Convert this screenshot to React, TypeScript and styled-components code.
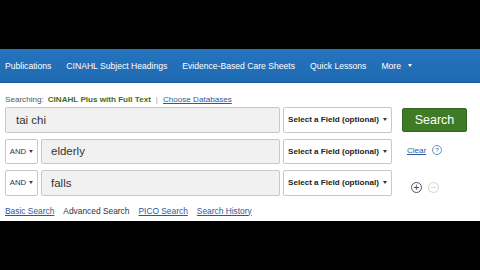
import React from 'react'
import styled, { createGlobalStyle } from 'styled-components'

const COLORS = {
  black: '#000000',
  nav: '#1f6bb3',
  navBorder: '#175a9a',
  white: '#ffffff',
  gray: '#c8c8c8',
  inputBg: '#f1f1f1',
  text: '#333333',
  green: '#3c6e1e',
  button: '#3f7a27',
  link: '#2a5a9e',
}

const GlobalStyle = createGlobalStyle`
  html, body {
    margin: 0;
    padding: 0;
    background: ${COLORS.black};
    font-family: 'Liberation Sans', Arial, sans-serif;
  }
`

const Frame = styled.div`
  width: 480px;
  height: 270px;
  display: flex;
  flex-direction: column;
  background: ${COLORS.black};
  overflow: hidden;
`

const TopBand = styled.div`
  height: 49px;
  flex-shrink: 0;
`

const NavBar = styled.nav`
  height: 34px;
  flex-shrink: 0;
  display: flex;
  align-items: center;
  gap: 15px;
  padding-left: 5px;
  background: linear-gradient(#2573bd, ${COLORS.nav});
  border-bottom: 1px solid ${COLORS.navBorder};
  box-sizing: border-box;
`

const NavItem = styled.span`
  color: ${COLORS.white};
  font-size: 8.6px;
  display: flex;
  align-items: center;
  gap: 7px;
  white-space: nowrap;
`

const Caret = styled.span<{ $color?: string }>`
  width: 0;
  height: 0;
  border-left: 2.5px solid transparent;
  border-right: 2.5px solid transparent;
  border-top: 3px solid ${(p) => p.$color || COLORS.white};
  display: inline-block;
`

const Panel = styled.div`
  height: 138px;
  flex-shrink: 0;
  background: ${COLORS.white};
  padding: 11px 0 0 5px;
  box-sizing: border-box;
`

const Searching = styled.div`
  font-size: 8.1px;
  color: #555;
  display: flex;
  gap: 4px;
  align-items: center;
  height: 10px;
`

const DbName = styled.span`
  color: ${COLORS.green};
  font-weight: bold;
`

const Pipe = styled.span`
  color: #aaa;
  margin: 0 1px;
`

const Link = styled.span`
  color: ${COLORS.link};
  text-decoration: underline;
`

const Body = styled.div`
  display: flex;
  margin-top: 3px;
`

const Rows = styled.div`
  display: flex;
  flex-direction: column;
  gap: 6px;
`

const Row = styled.div`
  display: flex;
  gap: 3px;
  height: 25.5px;
`

const BoolSelect = styled.div`
  width: 33px;
  box-sizing: border-box;
  border: 1px solid ${COLORS.gray};
  border-radius: 2px;
  background: ${COLORS.white};
  font-size: 7.8px;
  color: ${COLORS.text};
  display: flex;
  align-items: center;
  justify-content: center;
  gap: 3px;
`

const TermInput = styled.div<{ $wide?: boolean }>`
  width: ${(p) => (p.$wide ? 275 : 239)}px;
  box-sizing: border-box;
  border: 1px solid ${COLORS.gray};
  border-radius: 2px;
  background: ${COLORS.inputBg};
  font-size: 11.5px;
  color: ${COLORS.text};
  display: flex;
  align-items: center;
  padding-left: ${(p) => (p.$wide ? 10 : 9)}px;
`

const FieldSelect = styled.div`
  width: 109px;
  box-sizing: border-box;
  border: 1px solid ${COLORS.gray};
  border-radius: 2px;
  background: ${COLORS.white};
  font-size: 8.1px;
  font-weight: bold;
  color: #222;
  display: flex;
  align-items: center;
  padding-left: 4px;
  gap: 4px;
`

const Side = styled.div`
  display: flex;
  flex-direction: column;
  margin-left: 10px;
`

const SearchButton = styled.div`
  width: 65px;
  height: 24px;
  margin-top: 1px;
  box-sizing: border-box;
  background: ${COLORS.button};
  border: 1px solid #336820;
  border-radius: 2px;
  color: ${COLORS.white};
  font-size: 12.5px;
  display: flex;
  align-items: center;
  justify-content: center;
`

const ClearRow = styled.div`
  display: flex;
  align-items: center;
  gap: 6px;
  margin: 13px 0 0 5px;
  font-size: 8px;
`

const Help = styled.span`
  width: 8px;
  height: 8px;
  border: 1px solid #6f8fb8;
  border-radius: 50%;
  color: #3d6aa3;
  font-size: 6px;
  display: flex;
  align-items: center;
  justify-content: center;
`

const RoundButtons = styled.div`
  display: flex;
  gap: 6px;
  margin: 27px 0 0 9px;
`

const Circle = styled.span<{ $muted?: boolean }>`
  width: 11px;
  height: 11px;
  box-sizing: border-box;
  border: 1px solid ${(p) => (p.$muted ? '#d4d4d4' : '#555')};
  border-radius: 50%;
  color: ${(p) => (p.$muted ? '#d0d0d0' : '#444')};
  font-size: 10px;
  line-height: 9px;
  display: flex;
  align-items: center;
  justify-content: center;
`

const Tabs = styled.div`
  display: flex;
  gap: 9px;
  margin-top: 10px;
  font-size: 8.4px;
`

const Plain = styled.span`
  color: ${COLORS.text};
`

const navItems = [
  'Publications',
  'CINAHL Subject Headings',
  'Evidence-Based Care Sheets',
  'Quick Lessons',
]

const rows = [
  { op: null, term: 'tai chi' },
  { op: 'AND', term: 'elderly' },
  { op: 'AND', term: 'falls' },
]

const App = () => {
  return (
    <React.Fragment>
      <GlobalStyle />
      <Frame>
        <TopBand />
        <NavBar>
          {navItems.map((item) => (
            <NavItem key={item}>{item}</NavItem>
          ))}
          <NavItem>
            More <Caret />
          </NavItem>
        </NavBar>
        <Panel>
          <Searching>
            <span>Searching:</span>
            <DbName>CINAHL Plus with Full Text</DbName>
            <Pipe>|</Pipe>
            <Link>Choose Databases</Link>
          </Searching>
          <Body>
            <Rows>
              {rows.map((row) => (
                <Row key={row.term}>
                  {row.op && (
                    <BoolSelect>
                      {row.op} <Caret $color="#444" />
                    </BoolSelect>
                  )}
                  <TermInput $wide={!row.op}>{row.term}</TermInput>
                  <FieldSelect>
                    Select a Field (optional) <Caret $color="#333" />
                  </FieldSelect>
                </Row>
              ))}
            </Rows>
            <Side>
              <SearchButton>Search</SearchButton>
              <ClearRow>
                <Link>Clear</Link>
                <Help>?</Help>
              </ClearRow>
              <RoundButtons>
                <Circle>+</Circle>
                <Circle $muted>−</Circle>
              </RoundButtons>
            </Side>
          </Body>
          <Tabs>
            <Link>Basic Search</Link>
            <Plain>Advanced Search</Plain>
            <Link>PICO Search</Link>
            <Link>Search History</Link>
          </Tabs>
        </Panel>
      </Frame>
    </React.Fragment>
  )
}

export default App
